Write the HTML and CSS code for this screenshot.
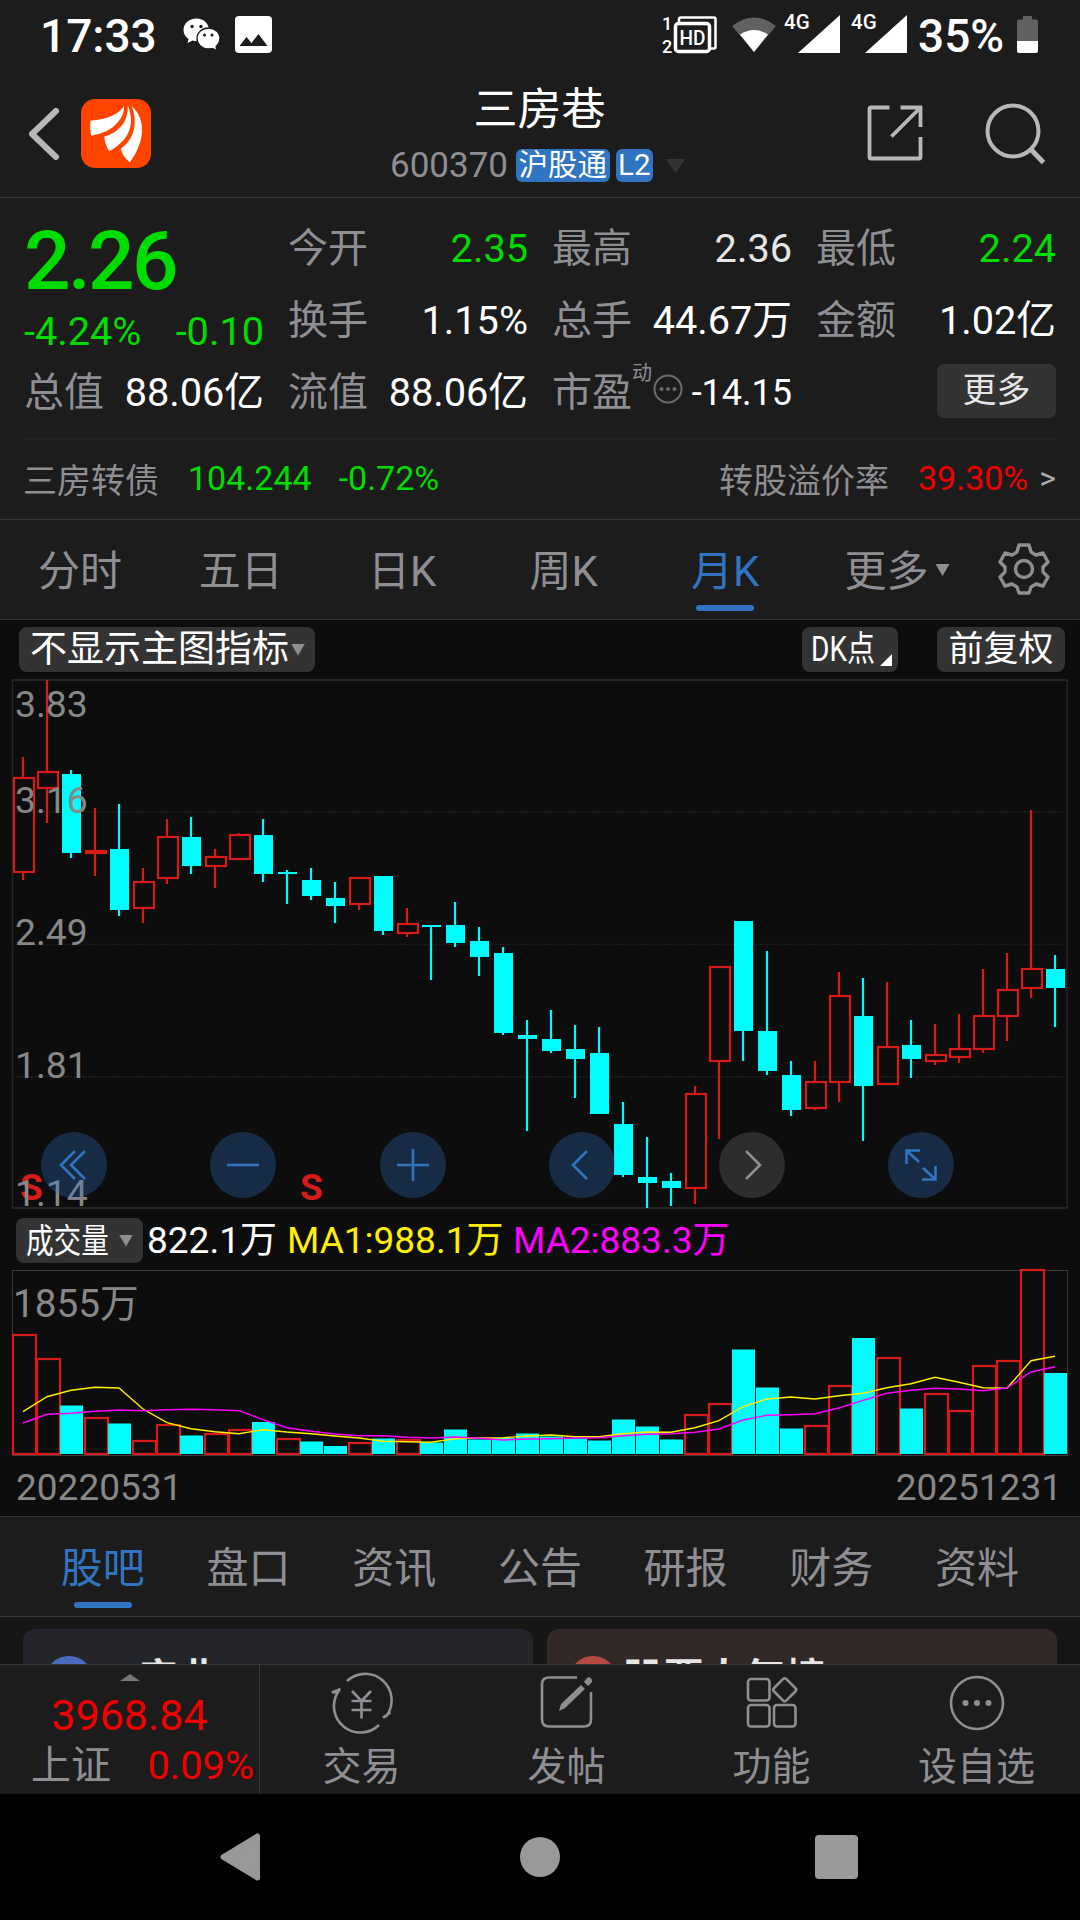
FILE: index.html
```html
<!DOCTYPE html>
<html lang="zh-CN">
<head>
<meta charset="UTF-8">
<title>三房巷 600370</title>
<link rel="stylesheet" href="styles.css">
</head>
<body>

<!-- 状态栏 -->
<div class="status">
    <span class="time">17:33</span>
    <svg class="wechat" width="38" height="32" viewBox="0 0 38 32">
        <path d="M13.500 0.500C6 0.500 0.500 5.500 0.500 12c0 4 2 7 5 9l-1 4 5-2.500q2 .5 4.500 .5C21 23 26 18 26 12S21 .5 13.500 .5z" fill="#fff"/>
        <ellipse cx="25.500" cy="20.500" rx="11.500" ry="10.500" fill="#fff" stroke="#1c1c1c" stroke-width="1.300"/>
        <path d="M28 29l5 2.500-1-5z" fill="#fff"/>
        <circle cx="9" cy="8.500" r="1.700" fill="#1c1c1c"/><circle cx="18" cy="8.500" r="1.700" fill="#1c1c1c"/>
        <circle cx="21.500" cy="17" r="1.500" fill="#1c1c1c"/><circle cx="29" cy="17" r="1.500" fill="#1c1c1c"/>
    </svg>
    <svg class="gallery" width="37" height="37" viewBox="0 0 37 37">
        <rect width="37" height="37" rx="4" fill="#fff"/>
        <path d="M4.500 30L11.500 21l5 6L23.500 18 32.500 30z" fill="#1c1c1c"/>
    </svg>
    <div class="status-right">
        <svg class="hd" width="56" height="40" viewBox="0 0 56 40">
            <text x="0" y="14.500" class="tiny">1</text>
            <text x="0" y="37.500" class="tiny">2</text>
            <path d="M17 7V4q0-1.500 1.500-1.500h33.500q1.500 0 1.500 1.500v28q0 1.500-1.500 1.500h-3" fill="none" stroke="#fff" stroke-width="2.500"/>
            <rect x="13.500" y="8.500" width="34" height="28" rx="3" fill="none" stroke="#fff" stroke-width="3.500"/>
            <text x="17.500" y="29.500" class="hd-text" textLength="26" lengthAdjust="spacingAndGlyphs">HD</text>
        </svg>
        <svg class="wifi" width="44" height="35" viewBox="0 0 44 35">
            <path d="M22 35L0 9Q22-8 44 9z" fill="#616161"/>
            <path d="M22 35L8 17.500Q22 8.500 36 17.500z" fill="#fff"/>
        </svg>
        <svg class="signal" width="56" height="39" viewBox="0 0 56 39">
            <text x="0" y="14.500" class="net">4G</text>
            <path d="M56 1v38H14z" fill="#fff"/>
        </svg>
        <svg class="signal" width="56" height="39" viewBox="0 0 56 39">
            <text x="0" y="14.500" class="net">4G</text>
            <path d="M56 1v38H14z" fill="#fff"/>
        </svg>
        <span class="percent">35%</span>
        <svg class="battery" width="21" height="37" viewBox="0 0 21 37">
            <path d="M6 0h9v3.500h4q2 0 2 2V25H0V5.500q0-2 2-2h4z" fill="#616161"/>
            <path d="M0 25h21v10q0 2-2 2H2q-2 0-2-2z" fill="#fff"/>
        </svg>
    </div>
</div>

<!-- 标题 -->
<div class="header">
    <div class="header-left">
        <svg width="32" height="54" viewBox="0 0 32 54"><path d="M28 4L4 27l24 23" fill="none" stroke="#b8b8b8" stroke-width="6" stroke-linecap="round" stroke-linejoin="round"/></svg>
        <svg class="logo" width="70" height="69" viewBox="235 297 202 207" preserveAspectRatio="none">
            <rect x="235" y="297" width="202" height="207" rx="42" fill="#ff4400"/>
            <path d="M262 362Q335 356 359 319Q362 340 342 366Q318 398 264 407Q260 385 262 362z" fill="#fff"/>
            <path d="M370 316C372 365 345 397 302 410Q305 437 317 454C368 424 395 380 370 316z" fill="#fff"/>
            <path d="M381 318C402 372 385 422 350 446Q355 470 376 487C410 440 432 365 381 318z" fill="#fff"/>
        </svg>
    </div>
    <div class="title">
        <div class="name">三房巷</div>
        <div class="code"><span>600370</span><span class="tag">沪股通</span><span class="tag">L2</span><i class="tri"></i></div>
    </div>
    <div class="header-right">
        <svg width="56" height="56" viewBox="0 0 56 56" fill="none" stroke="#b8b8b8" stroke-width="3.800">
            <path d="M22.500 2.500H4Q2.500 2.500 2.500 4v48q0 1.500 1.500 1.500h48q1.500 0 1.500-1.500V32M33.500 2.500h20v19.500M53 3L24.500 31.500"/>
        </svg>
        <svg width="61" height="62" viewBox="0 0 61 62" fill="none" stroke="#b8b8b8" stroke-width="4">
            <circle cx="28" cy="28" r="25.500"/><path d="M45.500 46L58.500 59.500" stroke-width="5"/>
        </svg>
    </div>
</div>

<!-- 行情 -->
<div class="quote">
    <div class="grid">
        <div class="now">
            <div class="price">2.26</div>
            <div class="change"><span>-4.24%</span><span>-0.10</span></div>
        </div>
        <div class="item"><label>今开</label><b class="green">2.35</b></div>
        <div class="item"><label>最高</label><b class="soft">2.36</b></div>
        <div class="item"><label>最低</label><b class="green">2.24</b></div>
        <div class="item"><label>换手</label><b>1.15%</b></div>
        <div class="item"><label>总手</label><b>44.67万</b></div>
        <div class="item"><label>金额</label><b>1.02亿</b></div>
        <div class="item"><label>总值</label><b>88.06亿</b></div>
        <div class="item"><label>流值</label><b>88.06亿</b></div>
        <div class="item pe">
            <label>市盈</label><small>动</small>
            <svg width="30" height="30" viewBox="0 0 30 30"><circle cx="15" cy="15" r="13.500" fill="none" stroke="#6b6b6b" stroke-width="2"/><g fill="#6b6b6b"><circle cx="8.500" cy="15" r="2"/><circle cx="15" cy="15" r="2"/><circle cx="21.500" cy="15" r="2"/></g></svg>
            <b>-14.15</b>
        </div>
        <div class="item"><span class="more">更多</span></div>
    </div>
    <div class="bond">
        <span>三房转债</span><span class="green bond-price">104.244</span><span class="green">-0.72%</span>
        <span class="premium">转股溢价率</span><span class="red">39.30%</span><span class="arrow">&gt;</span>
    </div>
</div>

<!-- 周期 -->
<div class="tabs period">
    <span>分时</span><span>五日</span><span>日K</span><span>周K</span><span class="on">月K</span><span>更多<i class="tri"></i></span>
    <svg class="gear" width="52" height="52" viewBox="0 0 52 52" fill="none" stroke="#8e8e93" stroke-width="3.400" stroke-linejoin="round">
        <path d="M21 2h10l2 7 5 3 7-2 5 9-5 5v5l5 5-5 9-7-2-5 3-2 6H21l-2-6-5-3-7 2-5-9 5-5v-5l-5-5 5-9 7 2 5-3z"/>
        <circle cx="26" cy="26" r="8.500"/>
    </svg>
</div>

<!-- K线 -->
<div class="toolbar">
    <span class="btn main">不显示主图指标<i class="tri"></i></span>
    <span class="btn dk"><em>DK点</em></span>
    <span class="btn right">前复权</span>
</div>
<div class="chart">
    <svg id="kline" width="1080" height="530" viewBox="0 0 1080 530"></svg>
    <div class="controls">
        <span><svg width="30" height="32" viewBox="0 0 30 32"><path d="M16 2L2 16l14 14M26 2L12 16l14 14"/></svg></span>
        <span><svg width="32" height="32" viewBox="0 0 32 32"><path d="M0 16h32"/></svg></span>
        <span><svg width="32" height="32" viewBox="0 0 32 32"><path d="M0 16h32M16 0v32"/></svg></span>
        <span><svg width="24" height="32" viewBox="0 0 24 32"><path d="M17 2L3 16l14 14"/></svg></span>
        <span class="off"><svg width="20" height="32" viewBox="0 0 20 32"><path d="M4 2l14 14L4 30"/></svg></span>
        <span><svg width="32" height="32" viewBox="0 0 32 32"><path d="M1.500 15V1.500H15M2 2l12 11M30.500 17v13.500H17M30 30L18 19"/></svg></span>
    </div>
</div>

<!-- 成交量 -->
<div class="toolbar volbar">
    <span class="btn vol"><em>成交量</em><i class="tri"></i></span>
    <span class="v0">822.1万</span><span class="v1">MA1:988.1万</span><span class="v2">MA2:883.3万</span>
</div>
<svg id="volume" width="1080" height="187" viewBox="0 0 1080 187"></svg>
<div class="dates"><span>20220531</span><span>20251231</span></div>

<!-- 资讯 -->
<div class="tabs news">
    <span class="on">股吧</span><span>盘口</span><span>资讯</span><span>公告</span><span>研报</span><span>财务</span><span>资料</span>
</div>
<div class="feed">
    <div class="card blue"><i></i><span>AI产业</span></div>
    <div class="card brown"><i></i><span>股票人气榜</span></div>
</div>

<!-- 底部 -->
<div class="bottom">
    <div class="index">
        <i class="up"></i>
        <div class="point">3968.84</div>
        <div class="index-row"><span>上证</span><span class="red">0.09%</span></div>
    </div>
    <div class="action">
        <svg width="62" height="58" viewBox="0 0 62 58">
            <path d="M16 7A26.500 26.500 0 0 1 55.500 42l-3.500 1.500 7.500-5M48 51A26.500 26.500 0 0 1 7 18l-6 .5L9.500 15"/>
            <path d="M21 17l9.500 10L40 17M20.500 27h20M20.500 36h20M30.500 27v17.500"/>
        </svg>
        <span>交易</span>
    </div>
    <div class="action">
        <svg width="54" height="58" viewBox="0 0 54 58">
            <path d="M37 3.500H9Q2 3.500 2 10.500v35q0 7 7 7h35q7 0 7-7V18"/>
            <path class="fill" d="M41 11l4 4-20 19-6 3 2-7zM47 4q3-2 4.500 1t-1 4.500L48 12l-4-4z"/>
        </svg>
        <span>发帖</span>
    </div>
    <div class="action">
        <svg width="52" height="58" viewBox="0 0 52 58">
            <rect x="2" y="5" width="21.500" height="21.500" rx="3"/>
            <rect x="2" y="31" width="21.500" height="21.500" rx="3"/>
            <rect x="28" y="31" width="21.500" height="21.500" rx="3"/>
            <rect x="30" y="7" width="17.500" height="17.500" rx="2.500" transform="rotate(45 38.700 15.700)"/>
        </svg>
        <span>功能</span>
    </div>
    <div class="action">
        <svg width="56" height="58" viewBox="0 0 56 58">
            <circle cx="28" cy="29" r="26"/>
            <g class="fill"><circle cx="16.500" cy="29" r="3"/><circle cx="28" cy="29" r="3"/><circle cx="39.500" cy="29" r="3"/></g>
        </svg>
        <span>设自选</span>
    </div>
</div>

<div class="nav">
    <svg width="42" height="48" viewBox="0 0 42 48"><path d="M38.500 3v42L4 24z" fill="#999" stroke="#999" stroke-width="5" stroke-linejoin="round"/></svg>
    <i class="home"></i>
    <i class="recent"></i>
</div>

<script src="script.js"></script>
</body>
</html>
```

FILE: styles.css
```css
* {
    box-sizing: border-box;
}

body {
    margin: 0;
    width: 1080px;
    height: 1920px;
    overflow: hidden;
    display: flex;
    flex-direction: column;
    background: #0d0d0d;
    color: #fff;
    font-family: Roboto, "Noto Sans CJK SC", sans-serif;
}

svg {
    display: block;
    flex-shrink: 0;
    overflow: visible;
}

i, em {
    font-style: normal;
}

.green { color: #00dc00 !important; }
.red { color: #f00000; }

.tri {
    display: inline-block;
    width: 14px;
    height: 12px;
    background: #8e8e93;
    clip-path: polygon(0 0, 100% 0, 50% 100%);
}

/* 状态栏 */
.status {
    height: 72px;
    background: #1c1c1c;
    display: flex;
    align-items: flex-start;
    padding: 0 42px 0 40px;
    font-size: 46px;
    font-weight: 500;
    line-height: 72px;
}

.time { width: 143px; }
.wechat { margin-top: 18px; }
.gallery { margin: 16px 0 0 14px; }

.status-right {
    margin-left: auto;
    display: flex;
    align-items: flex-start;
}

.tiny { font-size: 18px; fill: #fff; }
.hd-text { font-size: 20px; font-weight: 500; fill: #fff; }
.net { font-size: 20.500px; font-weight: 500; fill: #fff; }
.hd { margin-top: 15px; }
.wifi { margin: 17px 8px 0 14px; }
.signal { margin: 14px 11px 0 0; }
.percent { width: 99px; }
.battery { margin-top: 16px; }

/* 标题 */
.header {
    height: 126px;
    background: #1c1c1c;
    border-bottom: 1px solid #363636;
    display: grid;
    grid-template-columns: 270px 540px 270px;
}

.header-left {
    display: flex;
    align-items: center;
    height: 123px;
    padding: 0 0 0 28px;
}

.header-left .logo { margin-left: 21px; }

.title {
    text-align: center;
    padding-top: 10px;
}

.name {
    font-size: 44px;
    line-height: 56px;
    height: 67px;
    margin-left: -1px;
}

.code {
    display: flex;
    align-items: center;
    height: 33px;
    line-height: 33px;
    padding-left: 120px;
    font-size: 35px;
    color: #8e8e93;
}

.tag {
    background: #3074c2;
    color: #fff;
    border-radius: 6px;
    font-size: 29.500px;
    height: 33px;
    line-height: 32px;
    padding: 0 2.500px;
    margin-left: 6px;
}

.code span:nth-child(2) { margin-left: 8px; }

.code .tri {
    width: 21px;
    height: 14px;
    margin-left: 12px;
    background: #333;
}

.header-right {
    display: flex;
    align-items: flex-start;
    padding: 33px 0 0 57px;
}

.header-right svg:first-child { margin: 0 62px 0 0; }
.header-right svg:last-child { margin-top: -2px; }

/* 行情 */
.quote {
    height: 322px;
    background: #1c1c1c;
    border-bottom: 1px solid #363636;
    padding: 15px 24px 0;
}

.grid {
    display: grid;
    grid-template-columns: repeat(4, 240px);
    grid-auto-rows: 72px;
    column-gap: 24px;
    height: 225px;
}

.now {
    grid-row: span 2;
    color: #00dc00;
}

.price {
    font-size: 82px;
    font-weight: 500;
    line-height: 96px;
    letter-spacing: -2.700px;
}

.change {
    display: flex;
    justify-content: space-between;
    font-size: 39.700px;
    line-height: 46px;
}

.item {
    display: flex;
    justify-content: space-between;
    align-items: center;
    font-size: 40px;
    line-height: 72px;
    white-space: nowrap;
}

.item label { color: #8e8e93; }
.item b { font-weight: 400; font-size: 39.700px; }
.item .soft { color: #e6e6e6; }

.pe {
    justify-content: flex-start;
}

.pe small {
    font-size: 20px;
    color: #8e8e93;
    line-height: 20px;
    margin-bottom: 40px;
}

.pe svg { margin: 0 0 8px 1px; }
.pe b { font-size: 36px; margin-left: auto; }

.more {
    margin: 0 0 5px auto;
    width: 119px;
    height: 54px;
    border-radius: 7px;
    background: #333;
    color: #e6e6e6;
    font-size: 34px;
    line-height: 52px;
    text-align: center;
}

.bond {
    height: 81px;
    border-top: 2px solid #222;
    display: flex;
    align-items: center;
    font-size: 34px;
    color: #8e8e93;
    padding-bottom: 3px;
    margin-left: -1px;
}

.bond-price { margin: 0 27px 0 29px; }
.premium { margin: 0 29px 0 auto; }
.arrow { margin-left: 11px; font-size: 32px; color: #aaa; }

/* 选项卡 */
.tabs {
    display: flex;
    background: #1c1c1c;
    border-bottom: 1px solid #363636;
    font-size: 42px;
    color: #8e8e93;
    line-height: 100px;
}

.tabs span {
    text-align: center;
    white-space: nowrap;
}

.tabs .on {
    color: #3074c2;
    position: relative;
}

.tabs .on::after {
    content: "";
    position: absolute;
    left: 50%;
    bottom: 8px;
    width: 58px;
    height: 6px;
    margin-left: -29px;
    border-radius: 3px;
    background: #3074c2;
}

.period { height: 100px; line-height: 103px; padding-right: 2px; }
.period span { width: 161.500px; height: 99px; }
.period span:first-child { width: 160px; }
.period span:nth-child(6) { width: 182px; }
.period .tri { margin: 0 0 10px 7px; vertical-align: middle; }
.gear { margin: 23px 0 0 10px; }

.news {
    height: 101px;
    border-top: 1px solid #363636;
    padding: 0 30px;
    line-height: 104px;
}

.news span { width: 145.700px; height: 99px; }

/* 工具条 */
.toolbar {
    height: 60px;
    display: flex;
    align-items: flex-start;
    padding: 7px 15px 0 19px;
    white-space: nowrap;
}

.btn {
    height: 45px;
    line-height: 48px;
    border-radius: 8px;
    background: #333;
    display: flex;
    align-items: center;
}

.main { width: 296px; padding-left: 11px; font-size: 37px; line-height: 50px; }
.main .tri { margin-left: 2px; }

.dk {
    width: 96px;
    margin-left: auto;
    font-size: 35px;
    padding-left: 9px;
    position: relative;
}

.dk em, .vol em {
    display: block;
    transform: scaleX(.8);
    transform-origin: 0 50%;
}

.dk::after {
    content: "";
    position: absolute;
    right: 6px;
    bottom: 6px;
    width: 12px;
    height: 12px;
    background: #fff;
    clip-path: polygon(100% 0, 100% 100%, 0 100%);
}

.right { width: 128px; margin-left: 39px; font-size: 35px; justify-content: center; }

.volbar {
    padding: 8px 0 0 16px;
    font-size: 37px;
    line-height: 45px;
}

.vol { width: 127px; padding-left: 10px; font-size: 34.500px; position: relative; line-height: 46px; }
.vol em { width: 92px; }
.vol .tri { margin-left: 1px; }
.v0 { margin-left: 4px; width: 140px; }
.v1 { color: #fff000; width: 226px; }
.v2 { color: #ff00ff; }

/* 图表 */
.chart {
    height: 530px;
    position: relative;
}

.label { font-size: 37.300px; fill: #888; }
.vol-label { font-size: 38.700px; fill: #888; }
.mark { font-size: 37px; font-weight: 700; fill: #d71a1a; }

.controls {
    position: absolute;
    left: 41px;
    right: 126px;
    top: 452px;
    display: flex;
    justify-content: space-between;
}

.controls span {
    width: 66px;
    height: 66px;
    border-radius: 50%;
    background: rgba(48, 116, 194, .3);
    display: flex;
    align-items: center;
    justify-content: center;
}

.controls svg {
    fill: none;
    stroke: #3074c2;
    stroke-width: 2.600;
}

.controls .off { background: rgba(120, 120, 120, .3); }
.controls .off svg { stroke: #8e8e93; }

.dates {
    height: 59px;
    display: flex;
    justify-content: space-between;
    padding: 0 18px 0 16px;
    font-size: 37px;
    line-height: 61px;
    color: #888;
}

/* 信息流 */
.feed {
    height: 47px;
    background: #161616;
    overflow: hidden;
    display: flex;
    gap: 14px;
    padding: 12px 23px 0;
}

.card {
    flex: 1;
    height: 120px;
    border-radius: 12px;
    padding: 27px 0 0 22px;
    display: flex;
    align-items: flex-start;
    font-size: 40.500px;
    font-weight: 700;
    line-height: 46px;
    color: #e6e6e6;
}

.card i { width: 48px; height: 48px; border-radius: 50%; margin-right: 6px; }
.blue { background: #24252b; }
.blue i { background: #4a6cc0; }
.brown { background: #322827; }
.brown i { background: #b84a44; }

/* 底部 */
.bottom {
    height: 130px;
    background: #1c1c1c;
    border-top: 1px solid #363636;
    display: flex;
    color: #8e8e93;
}

.index {
    width: 260px;
    border-right: 1px solid #363636;
    text-align: center;
    font-size: 40px;
}

.up {
    display: block;
    width: 20px;
    height: 7px;
    margin: 9px 0 0 120px;
    background: #77777b;
    clip-path: polygon(50% 0, 100% 100%, 0 100%);
}

.point {
    color: #f00000;
    font-size: 43px;
    line-height: 50px;
    margin-top: 9px;
}

.index-row {
    display: flex;
    justify-content: space-between;
    padding: 0 5px 0 31px;
    line-height: 51px;
}

.index-row .red { font-size: 39.700px; }

.action {
    flex: 1;
    display: flex;
    flex-direction: column;
    align-items: center;
    padding: 9px 2px 0 0;
    font-size: 39px;
    line-height: 56px;
}

.action svg {
    fill: none;
    stroke: #8e8e93;
    stroke-width: 2.600;
}

.action .fill { fill: #8e8e93; stroke: none; }
.action span { margin-top: 7px; }

.nav {
    height: 126px;
    background: #000;
    display: flex;
    align-items: center;
    justify-content: space-between;
    padding: 0 222px 0 219px;
}

.home { width: 40px; height: 40px; border-radius: 50%; background: #999; margin-left: 4px; }
.recent { width: 43px; height: 44px; border-radius: 4px; background: #999; }
```

FILE: script.js
```js
// 最高, 实体上沿, 实体下沿, 最低, 阳线(1)/阴线(0)
const candles = [
    [3.44, 3.33, 2.85, 2.81, 1], [3.83, 3.36, 3.28, 3.10, 1], [3.37, 3.35, 2.95, 2.925, 0], [3.18, 2.96, 2.95, 2.83, 1],
    [3.20, 2.97, 2.66, 2.63, 0], [2.87, 2.80, 2.67, 2.59, 1], [3.12, 3.03, 2.82, 2.79, 1], [3.13, 3.03, 2.88, 2.84, 0],
    [2.97, 2.93, 2.88, 2.77, 1], [3.05, 3.04, 2.92, 2.915, 1], [3.12, 3.04, 2.84, 2.80, 0], [2.86, 2.85, 2.84, 2.69, 0],
    [2.87, 2.81, 2.73, 2.71, 0], [2.80, 2.72, 2.68, 2.59, 0], [2.82, 2.82, 2.69, 2.66, 1], [2.83, 2.83, 2.55, 2.53, 0],
    [2.67, 2.585, 2.54, 2.52, 1], [2.58, 2.58, 2.57, 2.30, 0], [2.70, 2.58, 2.49, 2.47, 0], [2.57, 2.50, 2.42, 2.32, 0],
    [2.47, 2.44, 2.03, 2.02, 0], [2.10, 2.02, 2.00, 1.53, 0], [2.15, 2.00, 1.94, 1.93, 0], [2.07, 1.95, 1.90, 1.70, 0],
    [2.06, 1.93, 1.62, 1.62, 0], [1.68, 1.57, 1.31, 1.30, 0], [1.50, 1.30, 1.27, 1.14, 0], [1.32, 1.28, 1.24, 1.15, 0],
    [1.76, 1.72, 1.24, 1.16, 1], [2.37, 2.37, 1.89, 1.49, 1], [2.60, 2.60, 2.04, 1.89, 0], [2.45, 2.04, 1.84, 1.82, 0],
    [1.89, 1.82, 1.64, 1.61, 0], [1.89, 1.78, 1.65, 1.64, 1], [2.34, 2.22, 1.78, 1.68, 1], [2.31, 2.12, 1.76, 1.48, 0],
    [2.29, 1.96, 1.77, 1.77, 1], [2.10, 1.97, 1.90, 1.80, 0], [2.08, 1.92, 1.89, 1.87, 1], [2.13, 1.95, 1.91, 1.88, 1],
    [2.36, 2.12, 1.95, 1.93, 1], [2.44, 2.25, 2.12, 1.99, 1], [3.17, 2.36, 2.26, 2.21, 1], [2.43, 2.36, 2.26, 2.06, 0]
];

const volumes = [119, 95, 48.5, 36, 30.5, 13, 29, 18.5, 19.5, 23.5, 32, 15, 12.5, 8, 11, 15.5, 13.5, 11.5, 24.5, 14.5, 16, 20.5,
    17.5, 15.5, 13.5, 34.5, 27.5, 14.5, 39, 50, 104.5, 66.5, 25.5, 27.5, 67.5, 116, 95.5, 45.5, 59.5, 43, 87.5, 92.5, 183.5, 81];

const ma1 = [141.7, 126.7, 120.3, 117.3, 118, 139, 152.7, 158.7, 161.7, 163.7, 159.7, 162, 163.7, 166, 168, 171.3, 171.7, 172.3,
    168.7, 168, 167.7, 166, 165, 166.7, 166.7, 163.7, 162, 162.3, 157.7, 150.7, 136.7, 129, 127, 129, 125.7, 123.3, 117.7, 113.7,
    107.3, 112.3, 117.7, 118.3, 90.7, 86.3];

const ma2 = [153, 144.3, 143.3, 141.3, 140, 140.7, 139.7, 139.3, 139.7, 140.7, 149.7, 157.7, 161.3, 164, 165.7, 165.7, 167.3, 168,
    167, 168.3, 170, 169, 168.7, 168, 167.7, 165.7, 164.3, 163.7, 162.3, 159, 150, 145.3, 144.7, 143.7, 138, 130.3, 123.3, 120.3,
    118.3, 119, 120.7, 118, 102, 96.7];

const RED = "#d71a1a";
const CYAN = "#00fcfc";

const x = i => 23 + i * 24;
const y = p => Math.round((3.83 - p) * 196.3);

function line(x1, y1, x2, y2, color, w) {
    return `<line x1="${x1}" y1="${y1}" x2="${x2}" y2="${y2}" stroke="${color}" stroke-width="${w}"/>`;
}

/* K线图 */
let k = '<path d="M12.5 0v528M1067 0v528" stroke="#242424" stroke-width="1.5"/><path d="M12 0h1055M12 528h1055" stroke="#242424" stroke-width="2"/>';
[131.8, 264.6, 396.8].forEach(g => {
    k += `<line x1="13" y1="${g}" x2="1066" y2="${g}" stroke="#1e1e1e" stroke-width="1.5" stroke-dasharray="2 1"/>`;
});
candles.forEach(([h, t, b, l, up], i) => {
    const c = x(i), color = up ? RED : CYAN;
    k += line(c, y(h), c, y(t), color, 2.2) + line(c, y(b), c, y(l), color, 2.2);
    if (up) {
        k += `<rect x="${c - 9}" y="${y(t)}" width="20" height="${y(b) - y(t)}" fill="none" stroke="${RED}" stroke-width="2.2"/>`;
    } else {
        k += `<rect x="${c - 9}" y="${y(t)}" width="19" height="${y(b) - y(t)}" fill="${CYAN}"/>`;
    }
});
k += '<text class="mark" x="20" y="520">S</text><text class="mark" x="300" y="520">S</text>';
[["3.83", 37], ["3.16", 133], ["2.49", 265], ["1.81", 398], ["1.14", 526]].forEach(([t, ty]) => {
    k += `<text class="label" x="15" y="${ty}">${t}</text>`;
});
document.getElementById("kline").innerHTML = k;

/* 成交量 */
let v = '<rect x="12.5" y="0.5" width="1055" height="185" fill="none" stroke="#3c3c3c"/>';
volumes.forEach((h, i) => {
    const left = x(i) - 11;
    if (candles[i][4] || i === 11) {
        v += `<rect x="${left + 1}" y="${184 - Math.round(h)}" width="23" height="${Math.round(h)}" fill="none" stroke="${RED}" stroke-width="2.2"/>`;
    } else {
        v += `<rect x="${left}" y="${184 - h}" width="23" height="${h}" fill="${CYAN}"/>`;
    }
});
[[ma1, "#fff000"], [ma2, "#ff00ff"]].forEach(([ma, color]) => {
    const pts = ma.map((m, i) => x(i) + "," + m).join(" ");
    v += `<polyline points="${pts}" fill="none" stroke="${color}" stroke-width="1.4"/>`;
});
v += '<text class="vol-label" x="13" y="47">1855万</text>';
document.getElementById("volume").innerHTML = v;
```
